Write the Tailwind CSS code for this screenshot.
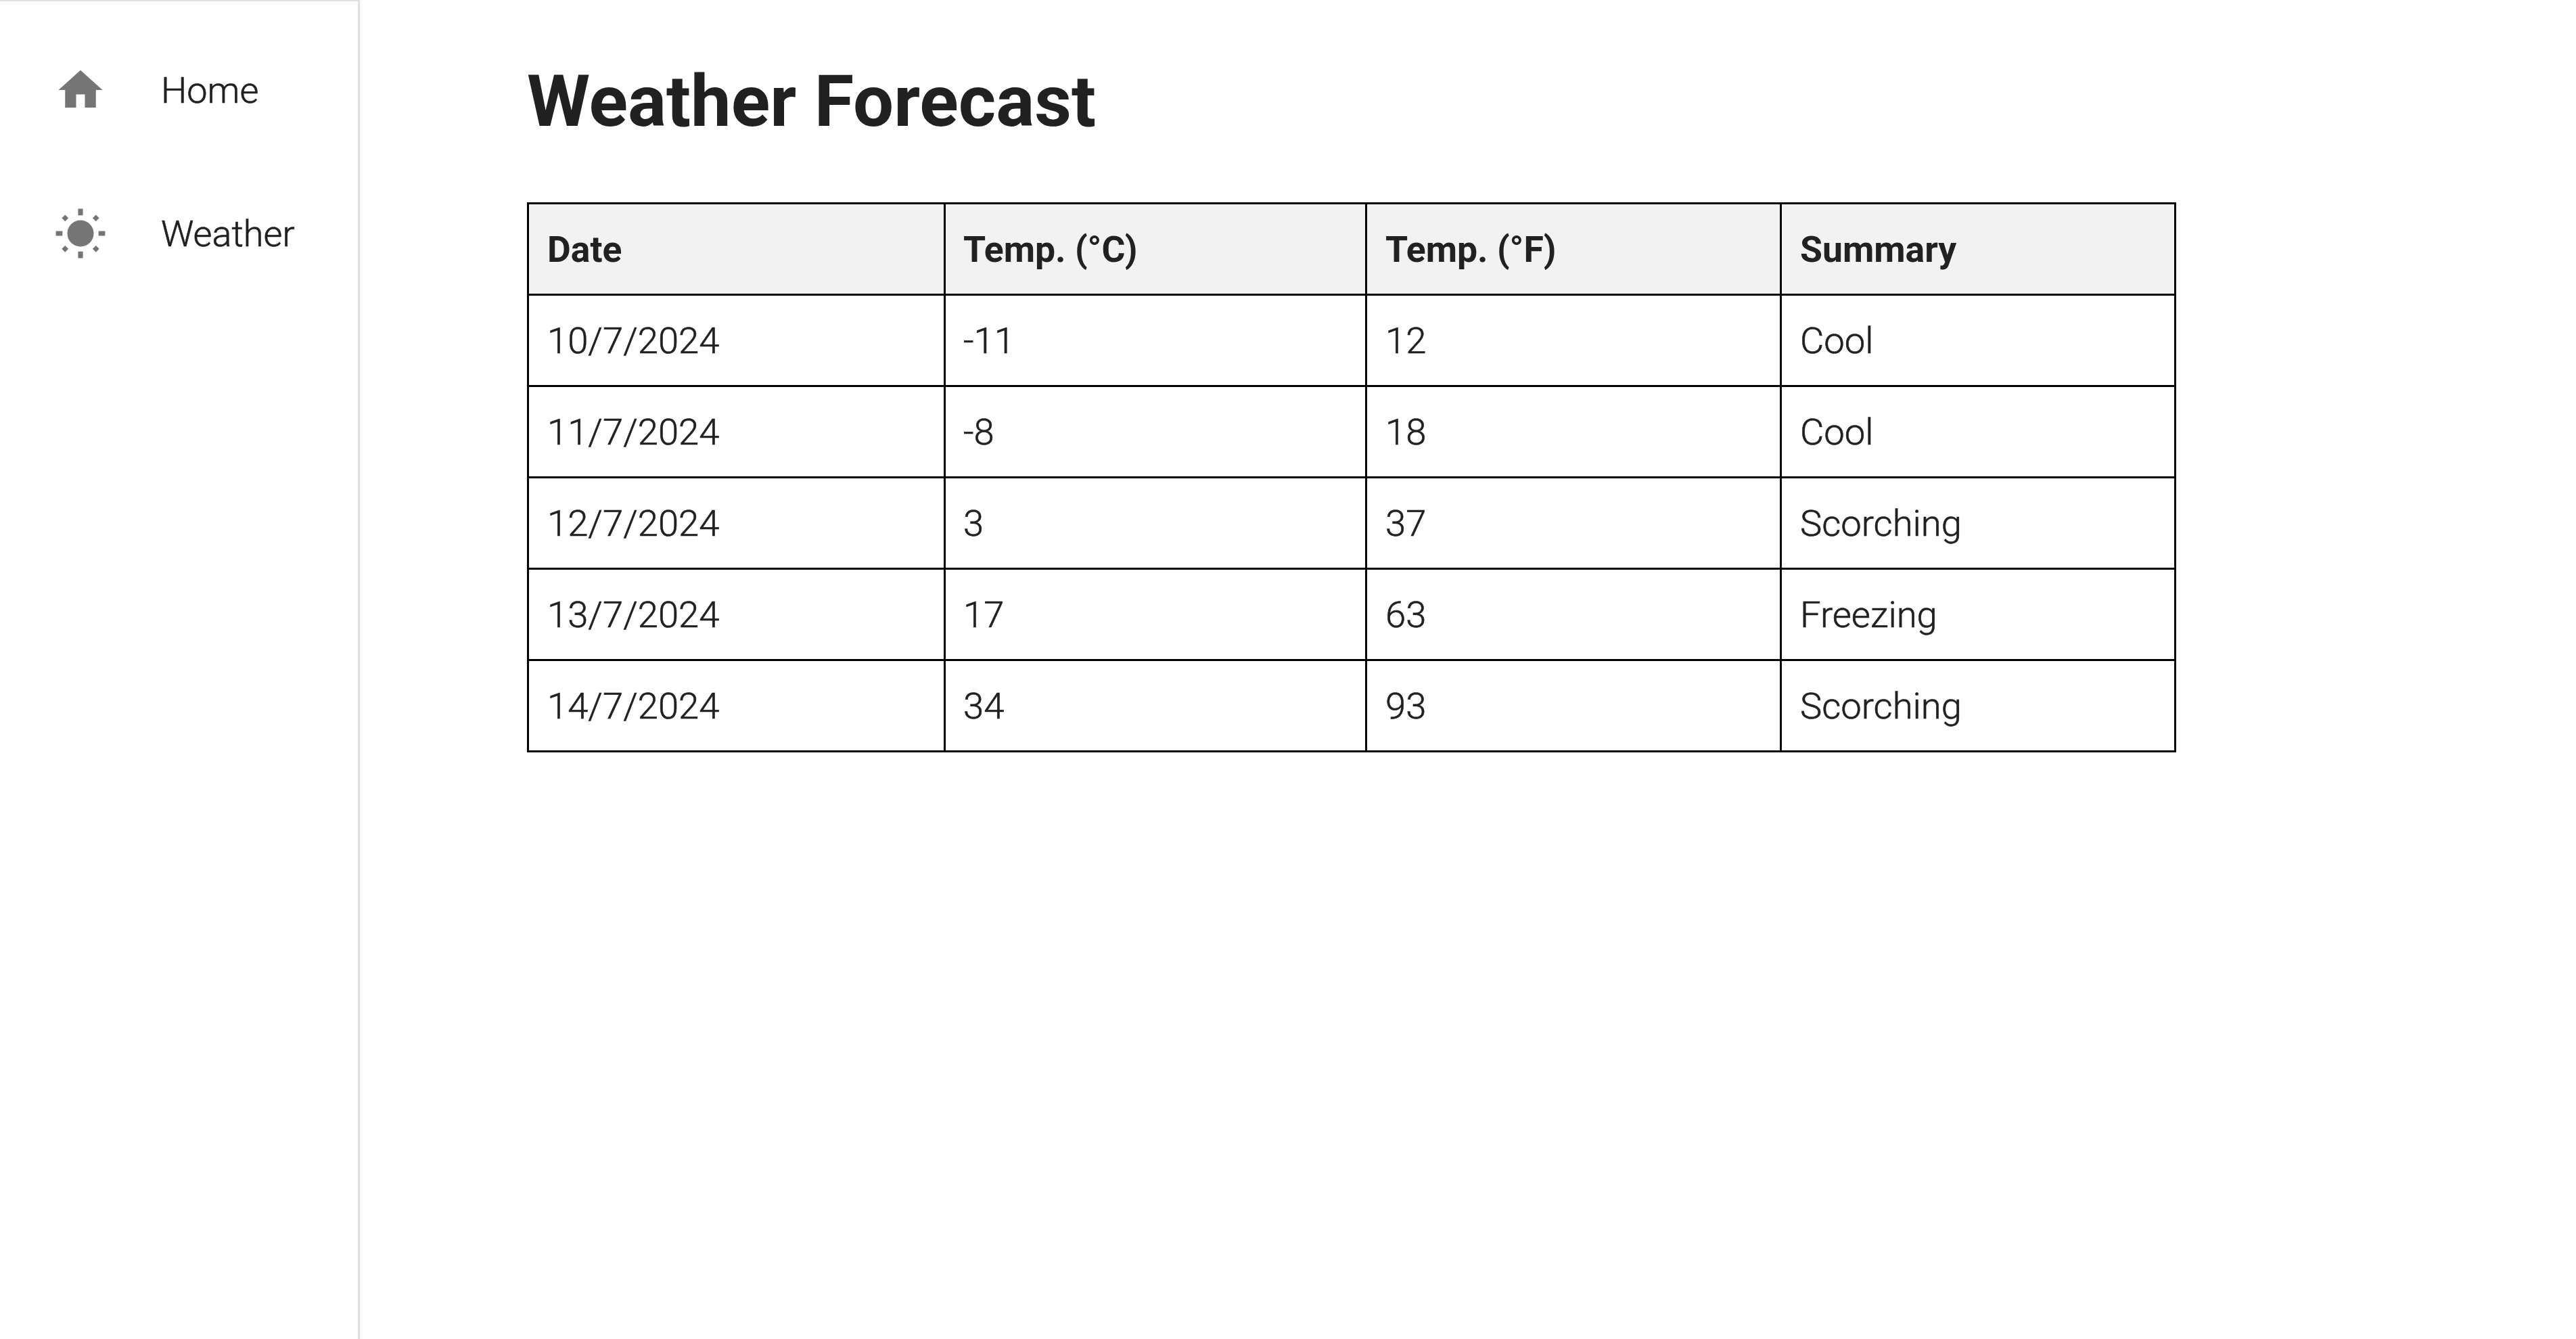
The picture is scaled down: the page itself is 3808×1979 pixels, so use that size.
<!DOCTYPE html>
<html lang="en">
<head>
    <meta charset="UTF-8">
    <title>Weather Forecast</title>
    <script src="https://cdn.jsdelivr.net/npm/@tailwindcss/browser@4"></script>
</head>
<body class="bg-white text-[#212121] font-['Roboto',sans-serif]">
    <div class="flex h-[1979px]">
        <!-- Sidebar -->
        <nav class="w-[532px] shrink-0 border-t-2 border-r-[3px] border-[#e0e0e0] pt-[65px]">
            <a class="flex items-center h-[132px] pl-[80px]">
                <svg class="w-[78px] h-[78px] fill-[#757575]" viewBox="0 0 24 24"><path d="M10 20v-6h4v6h5v-8h3L12 3 2 12h3v8z"/></svg>
                <span class="ml-[80px] text-[54px] font-light [-webkit-text-stroke:0.6px]">Home</span>
            </a>
            <a class="flex items-center h-[132px] mt-[80px] pl-[80px]">
                <svg class="w-[78px] h-[78px] fill-[#757575]" viewBox="0 0 24 24"><circle cx="12" cy="12" r="6"/><path d="M10.9.8h2.2v3h-2.2zM10.9 20.2h2.2v3h-2.2zM.8 10.9h3v2.2h-3zM20.2 10.9h3v2.2h-3zM5 3.5 6.5 5 5 6.5 3.5 5zM19 3.5 20.5 5 19 6.5 17.5 5zM5 17.5 6.5 19 5 20.5 3.5 19zM19 17.5 20.5 19 19 20.5 17.5 19z"/></svg>
                <span class="ml-[80px] text-[54px] font-light [-webkit-text-stroke:0.6px]">Weather</span>
            </a>
        </nav>

        <!-- Content -->
        <main class="pl-[247px] pt-[80px]">
            <h1 class="text-[106.5px] leading-[140px] font-bold">Weather Forecast</h1>
            <table class="mt-[79px] w-[2438px] table-fixed border-separate border-spacing-0 border-l-[3px] border-t-[3px] border-black text-left text-[54.4px] font-light [-webkit-text-stroke:0.6px]">
                <colgroup>
                    <col class="w-[616px]">
                    <col class="w-[623px]">
                    <col class="w-[613px]">
                    <col class="w-[583px]">
                </colgroup>
                <thead>
                    <tr class="h-[135px] bg-[#f2f2f2] font-bold text-[53.5px] [-webkit-text-stroke:0px]">
                        <th class="border-r-[3px] border-b-[3px] border-black px-[27px] pt-[2px]">Date</th>
                        <th class="border-r-[3px] border-b-[3px] border-black pl-[26px] pt-[2px]">Temp. (°C)</th>
                        <th class="border-r-[3px] border-b-[3px] border-black px-[27px] pt-[2px]">Temp. (°F)</th>
                        <th class="border-r-[3px] border-b-[3px] border-black px-[27px] pt-[2px]">Summary</th>
                    </tr>
                </thead>
                <tbody>
                    <tr class="h-[135px]">
                        <td class="border-r-[3px] border-b-[3px] border-black px-[27px] pt-[2px]">10/7/2024</td>
                        <td class="border-r-[3px] border-b-[3px] border-black pl-[26px] pt-[2px]">-11</td>
                        <td class="border-r-[3px] border-b-[3px] border-black px-[27px] pt-[2px]">12</td>
                        <td class="border-r-[3px] border-b-[3px] border-black px-[27px] pt-[2px]">Cool</td>
                    </tr>
                    <tr class="h-[135px]">
                        <td class="border-r-[3px] border-b-[3px] border-black px-[27px] pt-[2px]">11/7/2024</td>
                        <td class="border-r-[3px] border-b-[3px] border-black pl-[26px] pt-[2px]">-8</td>
                        <td class="border-r-[3px] border-b-[3px] border-black px-[27px] pt-[2px]">18</td>
                        <td class="border-r-[3px] border-b-[3px] border-black px-[27px] pt-[2px]">Cool</td>
                    </tr>
                    <tr class="h-[135px]">
                        <td class="border-r-[3px] border-b-[3px] border-black px-[27px] pt-[2px]">12/7/2024</td>
                        <td class="border-r-[3px] border-b-[3px] border-black pl-[26px] pt-[2px]">3</td>
                        <td class="border-r-[3px] border-b-[3px] border-black px-[27px] pt-[2px]">37</td>
                        <td class="border-r-[3px] border-b-[3px] border-black px-[27px] pt-[2px]">Scorching</td>
                    </tr>
                    <tr class="h-[135px]">
                        <td class="border-r-[3px] border-b-[3px] border-black px-[27px] pt-[2px]">13/7/2024</td>
                        <td class="border-r-[3px] border-b-[3px] border-black pl-[26px] pt-[2px]">17</td>
                        <td class="border-r-[3px] border-b-[3px] border-black px-[27px] pt-[2px]">63</td>
                        <td class="border-r-[3px] border-b-[3px] border-black px-[27px] pt-[2px]">Freezing</td>
                    </tr>
                    <tr class="h-[135px]">
                        <td class="border-r-[3px] border-b-[3px] border-black px-[27px] pt-[2px]">14/7/2024</td>
                        <td class="border-r-[3px] border-b-[3px] border-black pl-[26px] pt-[2px]">34</td>
                        <td class="border-r-[3px] border-b-[3px] border-black px-[27px] pt-[2px]">93</td>
                        <td class="border-r-[3px] border-b-[3px] border-black px-[27px] pt-[2px]">Scorching</td>
                    </tr>
                </tbody>
            </table>
        </main>
    </div>
</body>
</html>
